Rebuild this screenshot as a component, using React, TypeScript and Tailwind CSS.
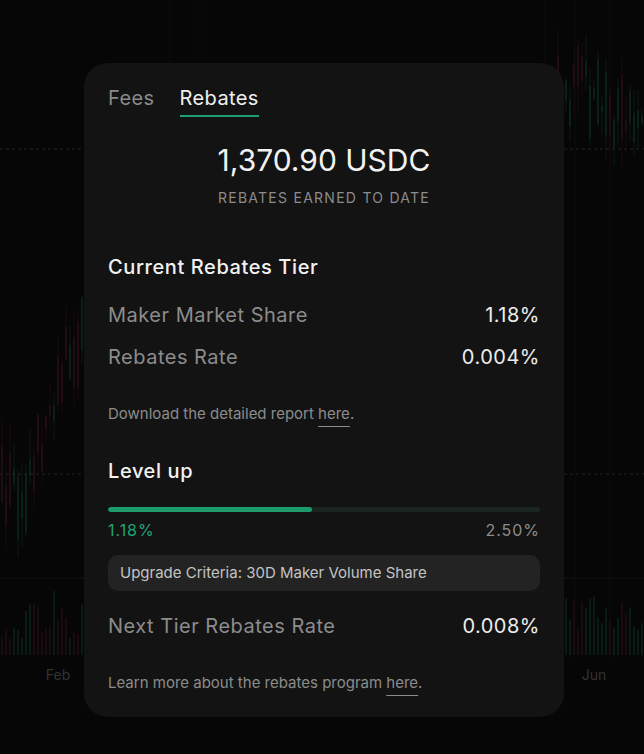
import React from "react";

function rng(seed: number) {
  let s = seed;
  return () => {
    s = (s * 16807) % 2147483647;
    return (s - 1) / 2147483646;
  };
}

const pts: [number, number][] = [
  [0, 495],
  [30, 480],
  [45, 420],
  [60, 370],
  [84, 330],
  [300, 250],
  [540, 110],
  [580, 80],
  [610, 130],
  [644, 120],
];

function trend(x: number) {
  for (let i = 0; i < pts.length - 1; i++) {
    const [x0, y0] = pts[i];
    const [x1, y1] = pts[i + 1];
    if (x >= x0 && x <= x1) return y0 + ((y1 - y0) * (x - x0)) / (x1 - x0);
  }
  return pts[pts.length - 1][1];
}

type Candle = { x: number; top: number; h: number; wt: number; wb: number; up: boolean; vol: number };

const candles: Candle[] = (() => {
  const r = rng(12345);
  const out: Candle[] = [];
  for (let x = 1; x < 644; x += 4) {
    const c = trend(x) + (r() - 0.5) * 50;
    const h = 6 + r() * 60;
    const top = c - h / 2;
    out.push({
      x,
      top,
      h,
      wt: top - r() * 30,
      wb: top + h + r() * 30,
      up: r() > 0.45,
      vol: 15 + r() * 50,
    });
  }
  return out;
})();

function ChartBg() {
  return (
    <svg className="absolute inset-0" width={644} height={754} viewBox="0 0 644 754">
      {[170, 200, 545, 575, 610].map((x) => (
        <line key={x} x1={x} y1={0} x2={x} y2={660} stroke="#0b0b0b" strokeWidth={1} />
      ))}
      <line x1={0} y1={149} x2={644} y2={149} stroke="#222222" strokeDasharray="3 3" />
      <line x1={0} y1={474} x2={644} y2={474} stroke="#222222" strokeDasharray="3 3" />
      <line x1={0} y1={578} x2={644} y2={578} stroke="#121212" />
      {candles.map((c, i) => (
        <g key={i} opacity={0.6}>
          <line
            x1={c.x + 1}
            y1={c.wt}
            x2={c.x + 1}
            y2={c.wb}
            stroke={c.up ? "#0b2a20" : "#2b0c17"}
            strokeWidth={1}
          />
          <rect x={c.x} y={c.top} width={2} height={c.h} fill={c.up ? "#0e3326" : "#34101c"} />
          <rect
            x={c.x}
            y={655 - c.vol}
            width={2}
            height={c.vol}
            fill={c.up ? "#0c2a20" : "#2a0d17"}
          />
        </g>
      ))}
      <text x={58} y={680} textAnchor="middle" fill="#333333" fontSize={14} fontFamily="Inter, sans-serif">
        Feb
      </text>
      <text x={594} y={680} textAnchor="middle" fill="#333333" fontSize={14} fontFamily="Inter, sans-serif">
        Jun
      </text>
    </svg>
  );
}

function Row({ label, value }: { label: string; value: string }) {
  return (
    <div className="flex items-center justify-between text-[20px] leading-[28px] tracking-[0.025em]">
      <span className="text-[#8c8c8c]">{label}</span>
      <span className="text-[#ededed]">{value}</span>
    </div>
  );
}

export default function App() {
  return (
    <div
      className="relative w-[644px] h-[754px] overflow-hidden bg-[#060606]"
      style={{ fontFamily: "Inter, 'Noto Sans', sans-serif" }}
    >
      <ChartBg />
      <div className="relative pt-[63px] pl-[84px]">
        <div className="w-[480px] h-[654px] rounded-[24px] bg-[#131313] px-[24px] pt-[21px] pb-[24px] flex flex-col">
          <div className="flex gap-[25px] text-[20px] leading-[28px] tracking-[0.02em]">
            <span className="text-[#8a8a8a] pb-[3px]">Fees</span>
            <span className="text-[#f0f0f0] pb-[3px] border-b-2 border-[#1f9e70]">Rebates</span>
          </div>
          <div className="mt-[25px] text-center text-[30px] leading-[36px] text-[#f2f2f2]">1,370.90 USDC</div>
          <div className="mt-[10px] text-center text-[14px] leading-[20px] tracking-[0.09em] text-[#8c8c8c]">
            REBATES EARNED TO DATE
          </div>

          <div className="mt-[45px] text-[20px] leading-[28px] font-medium tracking-[0.03em] text-[#f2f2f2]">
            Current Rebates Tier
          </div>
          <div className="mt-[20px]">
            <Row label="Maker Market Share" value="1.18%" />
          </div>
          <div className="mt-[14px]">
            <Row label="Rebates Rate" value="0.004%" />
          </div>
          <div className="mt-[33px] text-[15px] leading-[20px] text-[#8c8c8c]">
            Download the detailed report{" "}
            <span className="underline underline-offset-[7px] decoration-[#8c8c8c]">here</span>.
          </div>

          <div className="mt-[33px] text-[20px] leading-[28px] font-medium tracking-[0.03em] text-[#f2f2f2]">
            Level up
          </div>
          <div className="mt-[22px] h-[5px] rounded-full bg-[#1a2520] overflow-hidden">
            <div className="h-full rounded-full bg-[#1c9a6c]" style={{ width: "47.2%" }} />
          </div>
          <div className="mt-[6px] flex justify-between text-[16px] leading-[24px] tracking-[0.06em]">
            <span className="text-[#1fa474]">1.18%</span>
            <span className="text-[#8c8c8c]">2.50%</span>
          </div>
          <div className="mt-[13px] h-[36px] rounded-[10px] bg-[#232323] px-[12px] flex items-center text-[15px] text-[#c4c4c4]">
            Upgrade Criteria: 30D Maker Volume Share
          </div>
          <div className="mt-[21px]">
            <Row label="Next Tier Rebates Rate" value="0.008%" />
          </div>
          <div className="mt-[33px] text-[15px] leading-[20px] text-[#8c8c8c]">
            Learn more about the rebates program{" "}
            <span className="underline underline-offset-[7px] decoration-[#8c8c8c]">here</span>.
          </div>
        </div>
      </div>
    </div>
  );
}
